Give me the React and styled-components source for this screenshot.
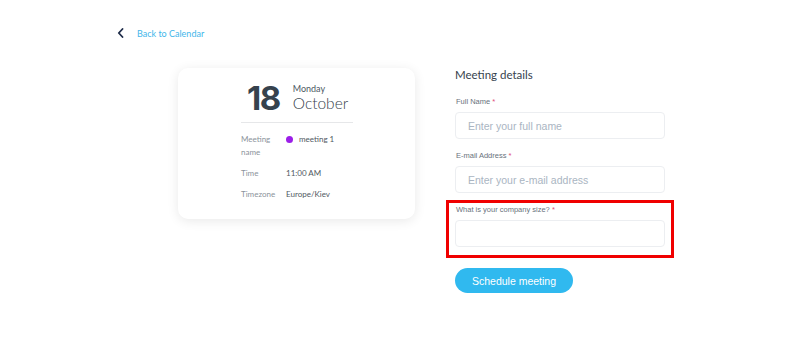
import React from 'react';
import styled, { createGlobalStyle } from 'styled-components';

const GlobalStyle = createGlobalStyle`
  body {
    margin: 0;
    background: #fff;
    font-family: 'Lato', 'Inter', sans-serif;
  }
  * { box-sizing: border-box; }
`;

const Page = styled.div`
  width: 800px;
  height: 347px;
  padding: 27px 0 0 117px;
`;

const BackLink = styled.a`
  display: flex;
  align-items: center;
  gap: 13px;
  height: 12px;
  color: #3fb6ea;
  font-size: 9px;
  text-decoration: none;
  cursor: pointer;
`;

const Main = styled.div`
  display: flex;
  align-items: flex-start;
  gap: 40px;
  margin: 29px 0 0 61px;
`;

const Card = styled.div`
  width: 237px;
  height: 151px;
  border-radius: 10px;
  background: #fff;
  box-shadow: 0 2px 12px rgba(0, 0, 0, 0.09);
  padding: 15px 0 0 63px;
`;

const DateRow = styled.div`
  display: flex;
  align-items: center;
  gap: 13px;
  padding-left: 6px;
  width: 112px;
  padding-bottom: 9px;
  border-bottom: 1px solid #e6e7e9;
`;

const Day = styled.div`
  font-family: 'Inter', sans-serif;
  font-size: 33px;
  font-weight: 700;
  letter-spacing: -1.5px;
  color: #36424d;
  line-height: 30px;
`;

const MonthBlock = styled.div`
  display: flex;
  flex-direction: column;
  color: #36424d;
`;

const Weekday = styled.span`
  font-size: 9px;
  line-height: 11px;
  color: #4c5863;
`;

const Month = styled.span`
  font-size: 15.5px;
  line-height: 19px;
  font-weight: 300;
`;

const Details = styled.div`
  display: grid;
  grid-template-columns: 45px 1fr;
  row-gap: 8px;
  margin-top: 10px;
  font-size: 8px;
  line-height: 13px;
`;

const Label = styled.span`
  color: #8b939b;
  width: 32px;
`;

const Value = styled.span`
  color: #4f5962;
  display: flex;
  align-items: flex-start;
  gap: 6px;
`;

const Dot = styled.span`
  width: 7px;
  height: 7px;
  margin-top: 3px;
  border-radius: 50%;
  background: #9b1ee8;
`;

const Form = styled.div`
  width: 210px;
  display: flex;
  flex-direction: column;
`;

const Title = styled.h2`
  margin: 0 0 14px;
  font-size: 11.5px;
  line-height: 14px;
  font-weight: 400;
  color: #36424d;
`;

const Field = styled.div`
  display: flex;
  flex-direction: column;
  gap: 4px;
  margin-bottom: 11px;
  ${({ $highlight }) =>
    $highlight &&
    `
    margin: -4px -9px 10px;
    padding: 1px 6px 8px 6px;
    border: 3px solid #f00000;
  `}
`;

const FieldLabel = styled.label`
  font-family: 'Liberation Sans', Arial, sans-serif;
  font-size: 7.5px;
  line-height: 12px;
  color: #68727c;
  padding-left: 1px;

  span {
    color: #e0507a;
  }
`;

const Input = styled.input`
  width: 210px;
  height: 27px;
  border: 1px solid #eceef1;
  border-radius: 4px;
  padding: 0 12px;
  font-family: 'Liberation Sans', Arial, sans-serif;
  font-size: 10.5px;
  color: #36424d;
  outline: none;

  &::placeholder {
    color: #aab5c2;
  }
`;

const Button = styled.button`
  width: 118px;
  height: 25px;
  border: none;
  border-radius: 13px;
  background: #30b9ef;
  color: #fff;
  font-family: 'Liberation Sans', Arial, sans-serif;
  font-size: 10.5px;
  cursor: pointer;
`;

const Chevron = () => (
  <svg width="7" height="10" viewBox="0 0 7 10" fill="none">
    <path d="M5.5 1 L1.8 5 L5.5 9" stroke="#1d2b48" strokeWidth="1.8" strokeLinecap="round" strokeLinejoin="round" />
  </svg>
);

export default function App() {
  return (
    <>
      <GlobalStyle />
      <Page>
        <BackLink>
          <Chevron />
          Back to Calendar
        </BackLink>
        <Main>
          <Card>
            <DateRow>
              <Day>18</Day>
              <MonthBlock>
                <Weekday>Monday</Weekday>
                <Month>October</Month>
              </MonthBlock>
            </DateRow>
            <Details>
              <Label>Meeting name</Label>
              <Value>
                <Dot />
                meeting 1
              </Value>
              <Label>Time</Label>
              <Value>11:00 AM</Value>
              <Label>Timezone</Label>
              <Value>Europe/Kiev</Value>
            </Details>
          </Card>
          <Form>
            <Title>Meeting details</Title>
            <Field>
              <FieldLabel>
                Full Name <span>*</span>
              </FieldLabel>
              <Input placeholder="Enter your full name" />
            </Field>
            <Field>
              <FieldLabel>
                E-mail Address <span>*</span>
              </FieldLabel>
              <Input placeholder="Enter your e-mail address" />
            </Field>
            <Field $highlight>
              <FieldLabel>
                What is your company size? <span>*</span>
              </FieldLabel>
              <Input />
            </Field>
            <Button>Schedule meeting</Button>
          </Form>
        </Main>
      </Page>
    </>
  );
}
